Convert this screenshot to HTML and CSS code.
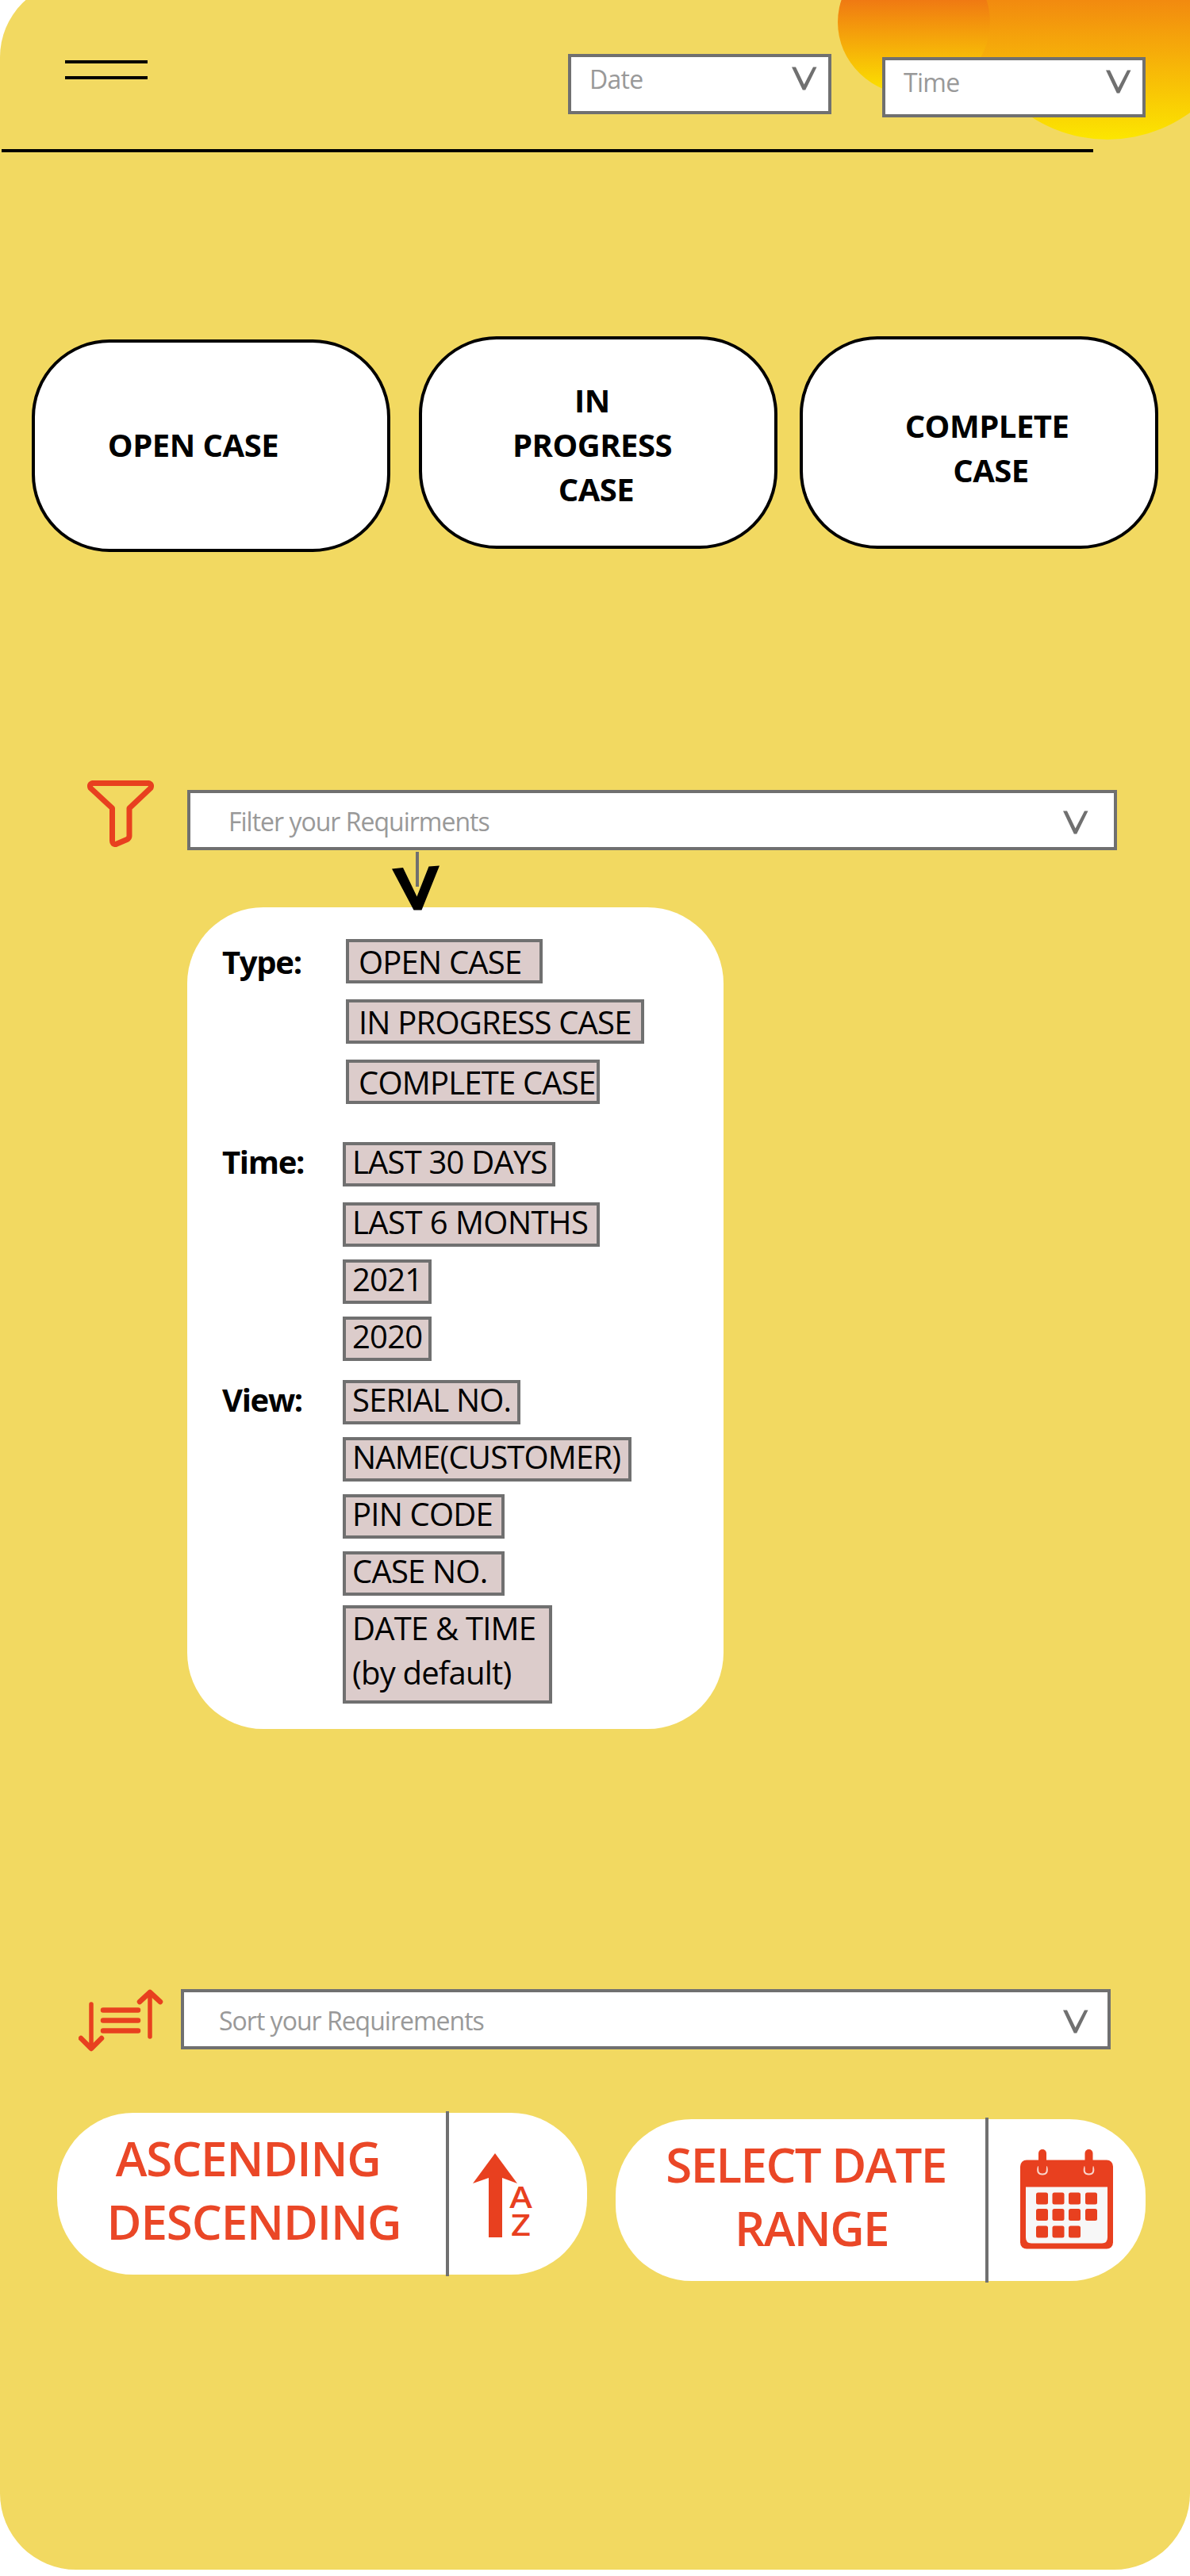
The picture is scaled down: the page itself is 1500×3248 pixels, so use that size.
FILE: index.html
```html
<!DOCTYPE html>
<html lang="en">
<head>
<meta charset="utf-8">
<title>Cases</title>
<link rel="stylesheet" href="styles.css">
</head>
<body>
<svg class="defs" width="0" height="0">
  <symbol id="chevron" viewBox="0 0 32 30"><path d="M0 .5H5L15.600 22.500 27 .5H31.500L17.200 29.500H13.800Z"/></symbol>
</svg>
<div class="screen">
  <svg class="sun" viewBox="0 0 470 200">
    <defs>
      <linearGradient id="g1" gradientUnits="userSpaceOnUse" x1="0" y1="-64" x2="0" y2="120"><stop offset="0" stop-color="#e83f1f"/><stop offset=".5" stop-color="#f3930d"/><stop offset="1" stop-color="#fce600"/></linearGradient>
      <linearGradient id="g2" gradientUnits="userSpaceOnUse" x1="0" y1="-176" x2="0" y2="176"><stop offset="0" stop-color="#e83f1f"/><stop offset=".5" stop-color="#f28a0f"/><stop offset="1" stop-color="#fce600"/></linearGradient>
    </defs>
    <circle cx="366" cy="0" r="176" fill="url(#g2)"/>
    <ellipse cx="122" cy="28" rx="96" ry="92" fill="url(#g1)"/>
  </svg>
  <header class="topbar">
    <div class="menu"></div>
    <div class="select select-date"><span>Date</span><svg class="chev"><use href="#chevron"/></svg></div>
    <div class="select select-time"><span>Time</span><svg class="chev"><use href="#chevron"/></svg></div>
  </header>

  <nav class="cases">
    <button class="case case-open">OPEN CASE</button>
    <button class="case case-progress">IN<br>PROGRESS<br>&nbsp;CASE</button>
    <button class="case case-complete">COMPLETE<br>&nbsp;CASE</button>
  </nav>

  <section class="filter">
    <svg class="funnel" viewBox="0 0 84 84"><path d="M7 3.500H77Q82 4.500 80 9.500L53 35V70Q53 73 50 74.500L36 80.500Q31.500 81 31.500 76V35L4 9.500Q2 4.500 7 3.500Z"/></svg>
    <div class="field"><span>Filter your Requirments</span><svg class="chev"><use href="#chevron"/></svg></div>
  </section>

  <section class="panel">
    <svg class="pointer" viewBox="0 0 60 76"><path class="stem" d="M32 2V46"/><path d="M0 23.500 14 22 31.500 58.500 46.500 20.500 60 19.500 37.500 75.500H27.500Z"/></svg>
    <div class="group type">
      <h2>Type:</h2>
      <div class="chips">
        <span class="chip w248">OPEN CASE</span>
        <span class="chip w376">IN PROGRESS CASE</span>
        <span class="chip w320">COMPLETE CASE</span>
      </div>
    </div>
    <div class="group time">
      <h2>Time:</h2>
      <div class="chips">
        <span class="chip w268">LAST 30 DAYS</span>
        <span class="chip w324 loose">LAST 6 MONTHS</span>
        <span class="chip w112">2021</span>
        <span class="chip w112">2020</span>
      </div>
    </div>
    <div class="group view">
      <h2>View:</h2>
      <div class="chips">
        <span class="chip w224">SERIAL NO.</span>
        <span class="chip w364">NAME(CUSTOMER)</span>
        <span class="chip w204">PIN CODE</span>
        <span class="chip w204">CASE NO.</span>
        <span class="chip w264 tall"><span class="lines">DATE &amp; TIME<br>(by default)</span></span>
      </div>
    </div>
  </section>

  <section class="sort">
    <svg class="sorticon" viewBox="0 0 108 80">
      <g class="thin"><path d="M16 19V72M90 10V60"/></g>
      <g class="mid"><path d="M3 62 16 75 29 62M77 16 90 4 103 16"/></g>
      <g class="bar"><path d="M31 26.500H75M31 39.500H75M31 52.500H75"/></g>
    </svg>
    <div class="field"><span>Sort your Requirements</span><svg class="chev"><use href="#chevron"/></svg></div>
  </section>

  <section class="actions">
    <button class="action order">
      <span class="label">ASCENDING&nbsp;<br>DESCENDING</span>
      <i class="rule"></i>
      <span class="az">
        <svg class="arrow" viewBox="0 0 56 106"><path d="M28 0 56 38 37 31V106H20V31L0 38Z"/></svg>
        <span class="letters">A<br>Z</span>
      </span>
    </button>
    <button class="action range">
      <span class="label">SELECT DATE&nbsp;<br>RANGE</span>
      <i class="rule"></i>
      <svg class="calendar" viewBox="0 0 117 126">
        <rect x="0" y="13.500" width="117" height="112" rx="8"/>
        <path class="sheet" d="M7 47.500H110V111Q110 118.500 103 118.500H14Q7 118.500 7 111Z"/>
        <g class="hooks"><path d="M23 21.500Q20 31.500 28 31.500T33 21.500M81.500 21.500Q78.500 31.500 86.500 31.500T91.500 21.500"/></g>
        <rect x="23" y="0" width="10" height="28" rx="5"/><rect x="81.500" y="0" width="10" height="28" rx="5"/>
        <g>
          <rect x="20" y="54.500" width="15" height="15" rx="2.500"/><rect x="40.500" y="54.500" width="15" height="15" rx="2.500"/><rect x="61" y="54.500" width="15" height="15" rx="2.500"/><rect x="82" y="54.500" width="15" height="15" rx="2.500"/>
          <rect x="20" y="75" width="15" height="15" rx="2.500"/><rect x="40.500" y="75" width="15" height="15" rx="2.500"/><rect x="61" y="75" width="15" height="15" rx="2.500"/><rect x="82" y="75" width="15" height="15" rx="2.500"/>
          <rect x="20" y="96.500" width="15" height="15" rx="2.500"/><rect x="40.500" y="96.500" width="15" height="15" rx="2.500"/><rect x="61" y="96.500" width="15" height="15" rx="2.500"/>
        </g>
      </svg>
    </button>
  </section>
</div>
</body>
</html>
```
FILE: styles.css
```css
* { box-sizing: border-box; }
body { margin: 0; background: #fff; font-family: "Open Sans", "Noto Sans", sans-serif; color: #000; }
button { border: 0; padding: 0; margin: 0; font: inherit; color: inherit; background: #fff; }
h2 { margin: 0; }
svg { display: block; flex: none; }
.defs { position: absolute; }
.screen { position: relative; z-index: 0; width: 1500px; height: 3240px; overflow: hidden; }
.screen::before { content: ""; position: absolute; z-index: -1; inset: -24px 0 0; background: #f2d961; border-radius: 96px; }

.sun { position: absolute; left: 1030px; top: 0; width: 470px; height: 200px; }

.topbar { position: relative; display: flex; align-items: flex-start; width: 1376px; height: 192px; margin-left: 2px; padding-left: 80px; border-bottom: 4px solid #000; }
.menu { flex: none; width: 104px; height: 24px; margin-top: 76px; border: solid #000; border-width: 4px 0; }
.select, .field { display: flex; flex: none; justify-content: space-between; background: #fff; border: 4px solid #707070; height: 76px; font-size: 32px; line-height: 44px; letter-spacing: -1px; color: #999; }
.select { width: 332px; padding: 6px 14px 0 23px; letter-spacing: -.7px; }
.select-date { margin: 68px 0 0 530px; }
.select-time { margin: 72px 0 0 64px; }
.chev { width: 32px; height: 30px; fill: #707070; }
.select .chev { margin-top: 6px; }

.cases { display: flex; padding: 232px 0 0 40px; }
.case { width: 452px; height: 268px; border: 4px solid #000; border-radius: 98px; font-size: 40px; font-weight: 700; line-height: 56px; letter-spacing: -.5px; }
.case-open { margin-top: 4px; padding: 0 45px 2px 0; }
.case-progress { margin-left: 36px; padding: 6px 15px 0 0; }
.case-complete { margin-left: 28px; padding: 14px 0 0 20px; }

.filter { display: flex; height: 88px; margin: 288px 0 0 110px; }
.funnel { width: 84px; height: 84px; fill: none; stroke: #e8401f; stroke-width: 7; stroke-linejoin: round; }
.filter .field { width: 1172px; margin: 12px 0 0 42px; padding: 14px 32px 0 48px; }
.field .chev { margin-top: 8px; }

.panel { position: relative; width: 676px; height: 1036px; margin: 72px 0 0 236px; padding: 40px 0 0 44px; background: #fff; border-radius: 96px; }
.pointer { position: absolute; left: 258px; top: -72px; width: 60px; height: 76px; }
.stem { stroke: #707070; stroke-width: 4; }
.group { display: flex; font-size: 40px; }
.group h2 { width: 152px; font-size: 40px; line-height: 50px; letter-spacing: -1.3px; }
.group.type h2 { width: 156px; line-height: 58px; }
.chips { display: flex; flex-direction: column; align-items: flex-start; gap: 16px; }
.type .chips { gap: 20px; }
.time { margin-top: 48px; }
.view { margin-top: 24px; }
.chip { height: 56px; padding-left: 8px; background: #dccccb; border: 4px solid #707070; line-height: 42px; letter-spacing: -.8px; white-space: nowrap; }
.type .chip { padding-left: 12px; line-height: 50px; }
.chip.loose { margin-top: 4px; letter-spacing: -.55px; }
.tall { height: 124px; margin-top: -4px; line-height: 56px; }
.lines { display: block; margin-top: -3px; }
.w112 { width: 112px; } .w204 { width: 204px; } .w224 { width: 224px; } .w248 { width: 248px; } .w264 { width: 264px; }
.w268 { width: 268px; } .w320 { width: 320px; } .w324 { width: 324px; } .w364 { width: 364px; } .w376 { width: 376px; }

.sort { display: flex; margin: 328px 0 0 99px; }
.sorticon { width: 108px; height: 80px; fill: none; stroke: #e8401f; stroke-linecap: round; stroke-linejoin: round; }
.thin { stroke-width: 5.500; }
.mid { stroke-width: 6.500; }
.bar { stroke-width: 6.500; }
.sort .field { width: 1172px; margin-left: 21px; padding: 14px 24px 0 44px; }

.actions { display: flex; gap: 36px; margin: 76px 0 0 72px; }
.action { display: flex; width: 668px; height: 204px; border-radius: 96px; color: #ea4727; font-size: 60px; font-weight: 600; line-height: 80px; }
.range { margin-top: 8px; }
.label { flex: none; width: 490px; padding: 17px 0 0 6px; letter-spacing: -1.1px; white-space: nowrap; }
.range .label { width: 466px; padding-left: 28px; letter-spacing: -1.6px; }
.rule { flex: none; width: 4px; height: 208px; margin-top: -2px; background: #707070; }
.az { display: flex; margin: 51px 0 0 30px; color: #e8401f; }
.arrow { width: 56px; height: 106px; fill: #e8401f; }
.letters { margin: 37px 0 0 -8px; font-size: 38px; font-weight: 600; line-height: 35px; transform: scaleX(1.14); }
.calendar { width: 117px; height: 126px; margin: 38px 0 0 40px; fill: #e8401f; }
.sheet { fill: #f7f7f7; }
.hooks { fill: none; stroke: #f9d5cb; stroke-width: 2; }
```
